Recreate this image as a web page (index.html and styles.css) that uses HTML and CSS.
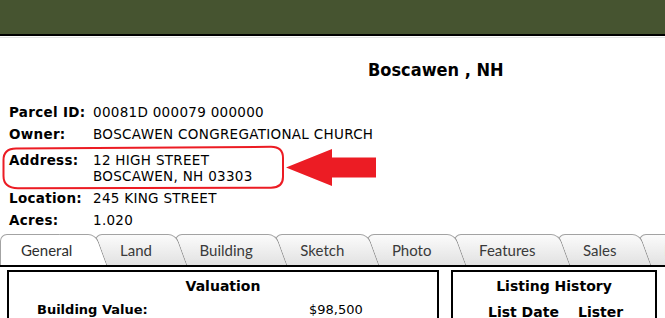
FILE: index.html
```html
<!DOCTYPE html>
<html>
<head>
<meta charset="utf-8">
<link rel="stylesheet" href="styles.css">
</head>
<body>
<div class="page">
  <div class="header"></div>
  <div class="rule"></div>
  <h1 class="title">Boscawen , NH</h1>
  <div class="info">
    <div class="row"><span class="lbl">Parcel ID:</span><span>00081D 000079 000000</span></div>
    <div class="row"><span class="lbl">Owner:</span><span>BOSCAWEN CONGREGATIONAL CHURCH</span></div>
    <div class="row addr"><span class="lbl">Address:</span><span>12 HIGH STREET<br>BOSCAWEN, NH 03303</span></div>
    <div class="row"><span class="lbl">Location:</span><span>245 KING STREET</span></div>
    <div class="row"><span class="lbl">Acres:</span><span>1.020</span></div>
  </div>
  <svg class="markup" width="380" height="50" viewBox="0 142 380 50">
    <path d="M16 148.5 L271 146.8 Q283 146.8 283 158 L283 177 Q283 187.5 271 187.8 L18 188.2 Q3.5 188 3.5 176 L3.5 160 Q3.5 148.6 16 148.5 Z" fill="none" stroke="#ec1c24" stroke-width="2"/>
    <polygon points="286,167.5 332,149 332,157.5 376,157.5 376,177.5 332,177.5 332,186" fill="#ec1c24"/>
  </svg>
  <div class="tabs">
    <div class="tab active t1">General</div>
    <div class="tab t2">Land</div>
    <div class="tab t3">Building</div>
    <div class="tab t4">Sketch</div>
    <div class="tab t5">Photo</div>
    <div class="tab t6">Features</div>
    <div class="tab t7">Sales</div>
    <div class="tab t8 hot">Map</div>
  </div>
  <div class="panels">
    <section class="box val">
      <h2>Valuation</h2>
      <div class="vrow"><span class="vl">Building Value:</span><span>$98,500</span></div>
    </section>
    <section class="box hist">
      <h2>Listing History</h2>
      <div class="hrow"><span class="hd">List Date</span><span>Lister</span></div>
    </section>
  </div>
</div>
</body>
</html>
```
FILE: styles.css
```css
html, body {
  margin: 0;
  padding: 0;
  background: #fff;
  overflow: hidden;
}
.page {
  position: relative;
  width: 665px;
  height: 318px;
  overflow: hidden;
  font-family: "DejaVu Sans", Verdana, sans-serif;
  font-size: 13px;
  color: #000;
}
.header {
  height: 34px;
  background: #465430;
  border-bottom: 2px solid #000;
}
.rule {
  height: 1px;
  margin-top: 1px;
  background: #e4e4e4;
}
.title {
  margin: 20px 0 0 0;
  padding-left: 368px;
  font-family: "DejaVu Sans Condensed", "DejaVu Sans", sans-serif;
  font-stretch: condensed;
  font-size: 18px;
  line-height: 24px;
  font-weight: bold;
}
.info {
  margin-top: 22px;
  padding-left: 9px;
  display: flex;
  flex-direction: column;
  gap: 6px;
  font-size: 13.5px;
  letter-spacing: 0.3px;
  line-height: 16px;
}
.row {
  display: grid;
  grid-template-columns: 84px auto;
}
.row.addr {
  margin-top: 4px;
}
.lbl {
  font-weight: bold;
}
.markup {
  position: absolute;
  left: 0;
  top: 142px;
}
.tabs {
  margin-top: 6px;
  display: flex;
  height: 31px;
  border-bottom: 2px solid #000;
  overflow: hidden;
  font-family: Lato, "Noto Sans", sans-serif;
  font-size: 15px;
  color: #3a3a3a;
}
.tab {
  position: relative;
  flex: none;
  box-sizing: border-box;
  height: 31px;
  padding: 2px 34.6px 0 25px;
  line-height: 29px;
  margin-left: -12px;
  white-space: nowrap;
}
.tab::before,
.tab::after {
  content: "";
  position: absolute;
  z-index: -1;
  top: 0;
  bottom: 0;
  background: linear-gradient(#fbfbfb, #e2e2e2);
  border-top: 1px solid #a3a3a3;
}
.tab::before {
  left: 0;
  right: 30px;
  border-left: 1px solid #a3a3a3;
  border-top-left-radius: 7px;
}
.tab::after {
  right: 11px;
  width: 36px;
  border-right: 1px solid #8f8f8f;
  border-top-right-radius: 8px;
  transform: skewX(20deg);
  transform-origin: top;
}
.tab.active::before,
.tab.active::after {
  background: #fff;
}
.t1 { margin-left: 0; padding-left: 21px; z-index: 9; color: #2e2e2e; }
.t2 { z-index: 8; }
.t3 { z-index: 7; }
.t4 { z-index: 6; }
.t5 { z-index: 5; }
.t6 { z-index: 4; }
.t7 { z-index: 3; }
.t8 { z-index: 2; }
.hot { color: #e0860b; }
.panels {
  margin-top: 3px;
  padding-left: 7px;
  display: flex;
  gap: 12px;
  align-items: flex-start;
}
.box {
  border: 2px solid #000;
  height: 80px;
}
.val { width: 428px; }
.hist { width: 202px; }
.box h2 {
  margin: 0;
  padding-top: 4px;
  font-size: 14px;
  line-height: 20px;
  text-align: center;
  font-weight: bold;
}
.vrow {
  margin-top: 4px;
  padding-left: 28px;
  display: grid;
  grid-template-columns: 272px auto;
  line-height: 20px;
}
.vl { font-weight: bold; }
.hrow {
  margin-top: 6px;
  padding-left: 35px;
  display: grid;
  grid-template-columns: 90px auto;
  font-size: 14px;
  font-weight: bold;
  line-height: 20px;
}
```
